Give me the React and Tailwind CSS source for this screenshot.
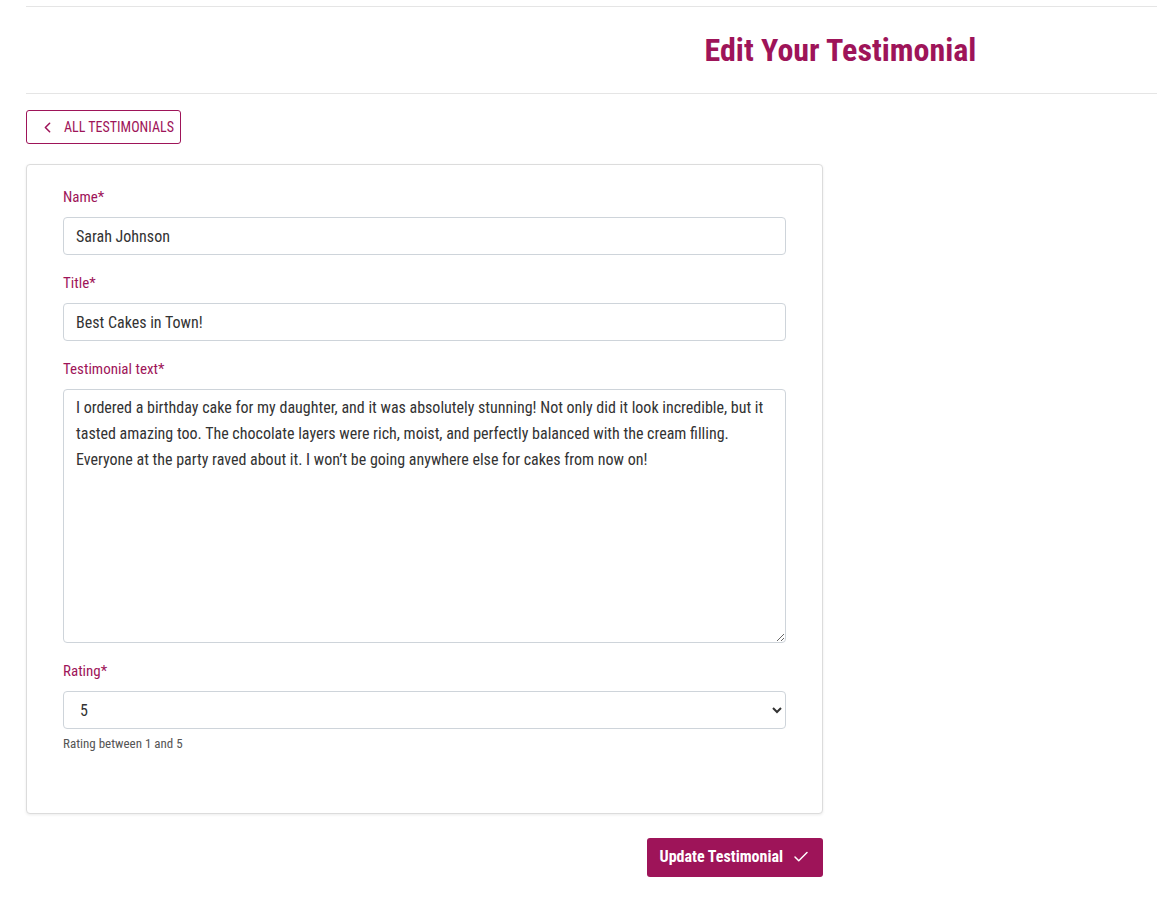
import { ChevronLeft, Check } from 'lucide-react'

const FONT = { fontFamily: '"Roboto Condensed", "Liberation Sans Narrow", "DejaVu Sans Condensed", Roboto, sans-serif' }

const TEXT =
  'I ordered a birthday cake for my daughter, and it was absolutely stunning! Not only did it look incredible, but it tasted amazing too. The chocolate layers were rich, moist, and perfectly balanced with the cream filling. Everyone at the party raved about it. I won’t be going anywhere else for cakes from now on!'

function Label({ children }) {
  return <label className="mb-[9px] block text-[15px] leading-[22px] text-[#9e1459]">{children}</label>
}

const field = 'block h-[38px] w-full rounded-[4px] border border-[#ced4da] bg-white px-[12px] text-[16px] text-[#333] outline-none'

export default function App() {
  return (
    <div className="min-h-screen bg-white pl-[26px] text-[#333]" style={FONT}>
      <div className="pt-[6px]">
        <div className="flex h-[88px] items-center justify-center border-y border-[#e5e5e5] pl-[498px]">
          <h1 className="text-[32px] font-bold leading-none text-[#9e1459]">Edit Your Testimonial</h1>
        </div>
      </div>

      <button className="mt-[16px] flex h-[34px] items-center gap-[8px] rounded-[3px] border border-[#9e1459] pl-[12px] pr-[6px] text-[14px] uppercase text-[#9e1459]">
        <ChevronLeft size={17} strokeWidth={2.2} />
        All Testimonials
      </button>

      <div className="mt-[20px] w-[797px] rounded-[4px] border border-[#dcdcdc] bg-white px-[36px] pb-[59px] pt-[21px] shadow-[0_1px_3px_rgba(0,0,0,0.08)]">
        <Label>Name*</Label>
        <input defaultValue="Sarah Johnson" className={field} />
        <div className="mt-[17px]">
          <Label>Title*</Label>
          <input defaultValue="Best Cakes in Town!" className={field} />
        </div>
        <div className="mt-[17px]">
          <Label>Testimonial text*</Label>
          <textarea
            defaultValue={TEXT}
            className="block h-[254px] w-full rounded-[4px] border border-[#ced4da] px-[12px] py-[5px] text-[16px] leading-[26px] text-[#333] outline-none"
          />
        </div>
        <div className="mt-[17px]">
          <Label>Rating*</Label>
          <select defaultValue="5" className={`${field} px-[10px]`}>
            {[1, 2, 3, 4, 5].map((n) => (
              <option key={n} value={n}>{n}</option>
            ))}
          </select>
          <p className="mt-[5px] text-[13px] text-[#555]">Rating between 1 and 5</p>
        </div>
      </div>

      <div className="flex w-[797px] justify-end pt-[24px] pb-[40px]">
        <button className="flex h-[39px] items-center gap-[9px] rounded-[3px] bg-[#9e1459] px-[13px] text-[16px] font-bold text-white">
          Update Testimonial
          <Check size={18} strokeWidth={2} />
        </button>
      </div>
    </div>
  )
}
